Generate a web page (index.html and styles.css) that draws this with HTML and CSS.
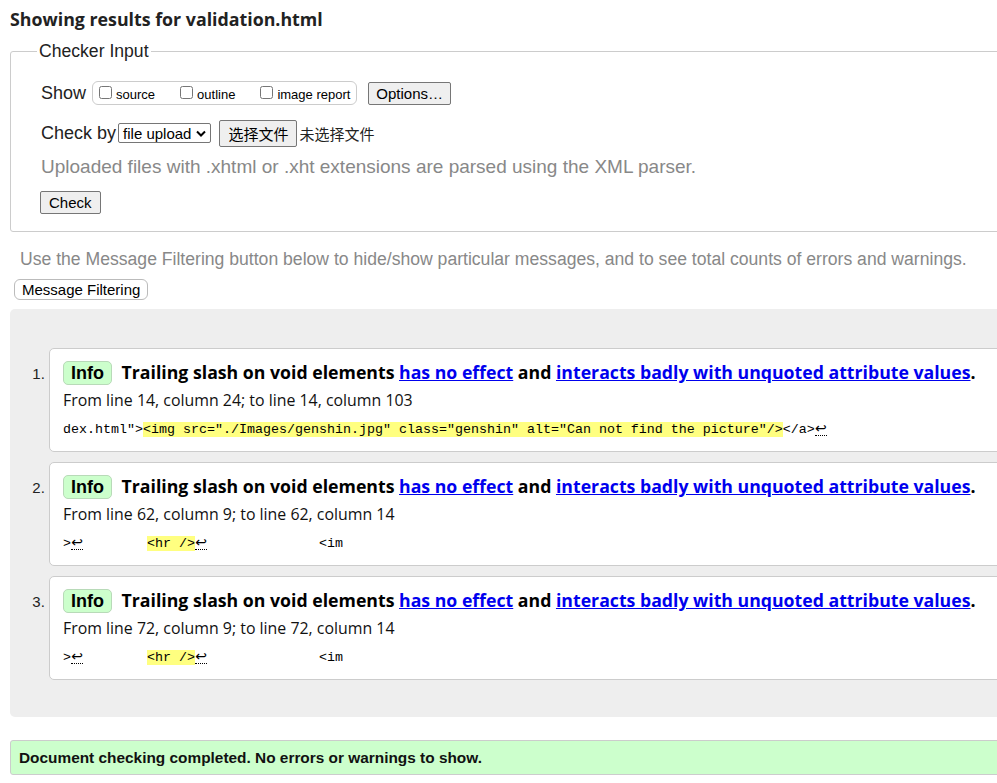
FILE: index.html
```html
<!DOCTYPE html>
<html>
<head>
<meta charset="utf-8">
<link rel="stylesheet" href="styles.css">
</head>
<body>
<div class="page">
  <h2 class="title">Showing results for validation.html</h2>
  <fieldset class="checker">
    <legend>Checker Input</legend>
    <div class="row show-row">
      <span class="lbl">Show</span>
      <span class="opts">
        <label><input type="checkbox"> source</label>
        <label><input type="checkbox"> outline</label>
        <label><input type="checkbox"> image report</label>
      </span>
      <button class="btn">Options…</button>
    </div>
    <div class="row by-row">
      <span class="lbl">Check by</span>
      <span class="select">file upload<svg width="10" height="7" viewBox="0 0 10 7"><path d="M1 1.5 L5 5.5 L9 1.5" fill="none" stroke="#000" stroke-width="2"/></svg></span>
      <button class="btn file-btn">选择文件</button>
      <span class="nofile">未选择文件</span>
    </div>
    <p class="hint">Uploaded files with .xhtml or .xht extensions are parsed using the XML parser.</p>
    <button class="btn check-btn">Check</button>
  </fieldset>
  <p class="filter-hint">Use the Message Filtering button below to hide/show particular messages, and to see total counts of errors and warnings.</p>
  <button class="filter-btn">Message Filtering</button>
  <div class="results">
    <ol class="msgs">
      <li class="msg">
        <div class="box">
          <p class="head"><span class="badge">Info</span> Trailing slash on void elements <a href="#">has no effect</a> and <a href="#">interacts badly with unquoted attribute values</a>.</p>
          <p class="loc">From line 14, column 24; to line 14, column 103</p>
          <p class="code">dex.html"&gt;<mark>&lt;img src="./Images/genshin.jpg" class="genshin" alt="Can not find the picture"/&gt;</mark>&lt;/a&gt;<span class="lf">↩</span></p>
        </div>
      </li>
      <li class="msg">
        <div class="box">
          <p class="head"><span class="badge">Info</span> Trailing slash on void elements <a href="#">has no effect</a> and <a href="#">interacts badly with unquoted attribute values</a>.</p>
          <p class="loc">From line 62, column 9; to line 62, column 14</p>
          <p class="code">&gt;<span class="lf">↩</span>        <mark>&lt;hr /&gt;</mark><span class="lf">↩</span>              &lt;im</p>
        </div>
      </li>
      <li class="msg">
        <div class="box">
          <p class="head"><span class="badge">Info</span> Trailing slash on void elements <a href="#">has no effect</a> and <a href="#">interacts badly with unquoted attribute values</a>.</p>
          <p class="loc">From line 72, column 9; to line 72, column 14</p>
          <p class="code">&gt;<span class="lf">↩</span>        <mark>&lt;hr /&gt;</mark><span class="lf">↩</span>              &lt;im</p>
        </div>
      </li>
    </ol>
  </div>
  <p class="done">Document checking completed. No errors or warnings to show.</p>
</div>
</body>
</html>
```
FILE: styles.css
```css
html, body {
  margin: 0;
  padding: 0;
  overflow: hidden;
  background: #fff;
}
.page {
  width: 1100px;
  padding: 0 0 0 10px;
  font-family: "Liberation Sans", Arial, sans-serif;
  color: #000;
}
.title {
  margin: 0;
  padding-top: 7px;
  height: 30px;
  font-family: "Open Sans", sans-serif;
  font-size: 17.8px;
  font-weight: 700;
  color: #222;
}
.checker {
  margin: 4px 0 0 0;
  padding: 0 0 17px 30px;
  border: 1px solid #ccc;
  border-radius: 3px;
}
.checker legend {
  margin-left: -4px;
  padding: 0 2px;
  font-size: 17.6px;
  color: #222;
}
.row {
  display: flex;
  align-items: center;
}
.lbl {
  font-size: 18px;
  color: #222;
}
.show-row {
  margin-top: 19px;
  height: 24px;
}
.opts {
  display: flex;
  align-items: center;
  margin-left: 6px;
  height: 22px;
  padding: 0 6px 0 6px;
  border: 1px solid #ccc;
  border-radius: 6px;
}
.opts label {
  display: flex;
  align-items: center;
  font-size: 13px;
  margin-right: 25px;
  padding-top: 3px;
}
.opts label:last-child { margin-right: 0; }
.opts input {
  margin: 0 4px 5px 0;
  width: 13px;
  height: 13px;
}
.btn {
  font-family: "Liberation Sans", Arial, sans-serif;
  font-size: 15px;
  color: #000;
  background: #efefef;
  border: 1px solid #767676;
  border-radius: 2px;
  padding: 0 7px;
  height: 23px;
  margin-left: 11px;
}
.by-row {
  margin-top: 15px;
  height: 26px;
}
.select {
  display: flex;
  align-items: center;
  gap: 5px;
  margin-left: 2px;
  height: 18px;
  padding: 0 4px 0 4px;
  border: 1px solid #767676;
  border-radius: 2px;
  font-size: 15px;
}
.file-btn {
  margin-left: 8px;
  height: 27px;
  padding: 0 8px;
  font-family: "Noto Sans CJK SC", sans-serif;
  font-size: 15px;
}
.nofile {
  margin-left: 2px;
  font-family: "Noto Sans CJK SC", sans-serif;
  font-size: 15px;
  color: #222;
}
.hint {
  margin: 10px 0 0 0;
  font-size: 19px;
  line-height: 22px;
  color: #888;
}
.check-btn {
  margin: 13px 0 0 -1px;
  height: 23px;
  padding: 0 8px;
}
.filter-hint {
  margin: 17px 0 0 10px;
  font-size: 17.6px;
  line-height: 20px;
  color: #888;
}
.filter-btn {
  margin: 10px 0 0 4px;
  height: 21px;
  padding: 0 7px;
  font-family: "Liberation Sans", Arial, sans-serif;
  font-size: 15px;
  color: #000;
  background: #fff;
  border: 1px solid #bbb;
  border-radius: 6px;
  display: block;
}
.results {
  margin-top: 9px;
  background: #eee;
  border-radius: 5px 0 0 5px;
  padding: 39px 0 37px 0;
}
.msgs {
  margin: 0;
  padding: 0 0 0 39px;
  list-style: decimal;
  font-family: "Liberation Sans", Arial, sans-serif;
  font-size: 15px;
}
.msg {
  margin-bottom: 10px;
  padding-top: 24px;
}
.msg:last-child { margin-bottom: 0; }
.msg::marker {
  color: #222;
}
.box {
  background: #fff;
  border: 1px solid #ccc;
  border-radius: 5px 0 0 5px;
  padding: 11px 0 0 13px;
  height: 91px;
  margin-top: -24px;
}
.head {
  margin: 0;
  font-family: "Open Sans", sans-serif;
  font-size: 17.7px;
  font-weight: 700;
  color: #000;
  line-height: 25px;
}
.head a {
  color: #00e;
  text-decoration: underline;
}
.badge {
  display: inline-block;
  background: #ccffcc;
  border: 1px solid #b8dab8;
  border-radius: 5px;
  padding: 0 7px;
  line-height: 22px;
  font-family: "Liberation Sans", Arial, sans-serif;
  font-size: 18px;
  margin-right: 5px;
}
.loc {
  margin: 5px 0 0 0;
  font-family: "Open Sans", sans-serif;
  font-size: 15.9px;
  line-height: 20px;
  color: #111;
}
.code {
  margin: 12px 0 0 0;
  font-family: "Liberation Mono", monospace;
  font-size: 13.33px;
  line-height: 16px;
  white-space: pre;
  color: #000;
}
.code mark {
  background: #ffff80;
  color: #000;
}
.lf {
  display: inline-block;
  width: 12px;
  text-align: center;
  font-family: "DejaVu Sans", sans-serif;
  font-size: 14px;
  border-bottom: 1px dotted #000;
  line-height: 13px;
}
.done {
  margin: 23px 0 0 0;
  background: #ccffcc;
  border: 1px solid #ccc;
  border-radius: 3px 0 0 3px;
  padding: 0 0 0 8px;
  height: 33px;
  line-height: 33px;
  font-size: 15.4px;
  font-weight: 700;
  color: #111;
}
```
